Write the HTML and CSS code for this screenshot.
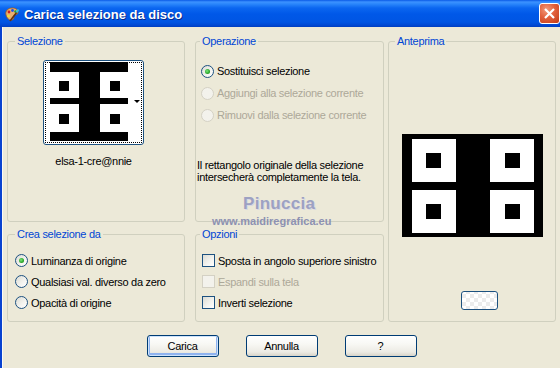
FILE: index.html
```html
<!doctype html>
<html>
<head>
  <title>Carica selezione da disco</title>
  <meta charset="utf-8">
  <link rel="stylesheet" href="styles.css">
</head>
<body>
<div class="window">
  <div class="titlebar">
    <svg class="app-icon" width="16" height="16" viewBox="0 0 16 16">
      <path d="M2 9 C1 5 4 2 8 2 C12 2 15 4 14 7 C13.5 9 11 8 10 9.5 C9 11 11 13 8 14 C5 15 3 12 2 9 Z" fill="#e8b070" stroke="#9a5a20" stroke-width="0.8"/>
      <circle cx="5" cy="6" r="1.4" fill="#d02020"/>
      <circle cx="8.5" cy="4.5" r="1.4" fill="#2050e0"/>
      <circle cx="11.5" cy="5.5" r="1.3" fill="#20a030"/>
      <circle cx="4.5" cy="10" r="1.3" fill="#f0e030"/>
      <path d="M6 15 L13 6" stroke="#603010" stroke-width="1.6"/>
      <path d="M12.5 6.5 L14.5 3.5" stroke="#30c0e0" stroke-width="2"/>
    </svg>
    <span class="title">Carica selezione da disco</span>
    <span class="close">
      <svg width="13" height="13" viewBox="0 0 13 13"><path d="M2 2 L11 11 M11 2 L2 11" stroke="#fff" stroke-width="2.2"/></svg>
    </span>
  </div>
  <div class="content">
    <div class="groups">
      <fieldset class="group g-sel">
        <legend>Selezione</legend>
        <div class="thumb-box">
          <div class="thumb">
            <svg class="thumb-img" width="78" height="79" viewBox="0 0 78 79">
              <rect width="78" height="79" fill="#000"/>
              <rect x="0" y="10" width="29" height="26" fill="#fff"/>
              <rect x="50" y="10" width="28" height="26" fill="#fff"/>
              <rect x="0" y="42" width="29" height="28" fill="#fff"/>
              <rect x="50" y="42" width="28" height="28" fill="#fff"/>
              <rect x="9" y="19" width="10" height="10" fill="#000"/>
              <rect x="60" y="19" width="10" height="10" fill="#000"/>
              <rect x="9" y="52" width="10" height="10" fill="#000"/>
              <rect x="60" y="52" width="10" height="10" fill="#000"/>
            </svg>
            <span class="thumb-arrow"></span>
          </div>
          <div class="thumb-name">elsa-1-cre@nnie</div>
        </div>
      </fieldset>

      <fieldset class="group g-op">
        <legend>Operazione</legend>
        <div class="opt"><span class="radio on"></span>Sostituisci selezione</div>
        <div class="opt off"><span class="radio"></span>Aggiungi alla selezione corrente</div>
        <div class="opt off"><span class="radio"></span>Rimuovi dalla selezione corrente</div>
        <p class="note">Il rettangolo originale della selezione<br>intersecherà completamente la tela.</p>
        <div class="watermark">
          <span class="wm-name">Pinuccia</span>
          <span class="wm-url">www.maidiregrafica.eu</span>
        </div>
      </fieldset>

      <fieldset class="group g-prev">
        <legend>Anteprima</legend>
        <svg class="preview" width="141" height="103" viewBox="0 0 141 103">
          <rect width="141" height="103" fill="#000"/>
          <rect x="10" y="5" width="44" height="43" fill="#fff"/>
          <rect x="88" y="5" width="44" height="43" fill="#fff"/>
          <rect x="10" y="56" width="44" height="43" fill="#fff"/>
          <rect x="88" y="56" width="44" height="43" fill="#fff"/>
          <rect x="24" y="19" width="15" height="15" fill="#000"/>
          <rect x="103" y="19" width="15" height="15" fill="#000"/>
          <rect x="24" y="70" width="15" height="15" fill="#000"/>
          <rect x="103" y="70" width="15" height="15" fill="#000"/>
        </svg>
        <span class="bg-button"></span>
      </fieldset>

      <fieldset class="group g-crea">
        <legend>Crea selezione da</legend>
        <div class="opt"><span class="radio on"></span>Luminanza di origine</div>
        <div class="opt"><span class="radio"></span>Qualsiasi val. diverso da zero</div>
        <div class="opt"><span class="radio"></span>Opacità di origine</div>
      </fieldset>

      <fieldset class="group g-opz">
        <legend>Opzioni</legend>
        <div class="opt"><span class="check"></span>Sposta in angolo superiore sinistro</div>
        <div class="opt off"><span class="check"></span>Espandi sulla tela</div>
        <div class="opt"><span class="check"></span>Inverti selezione</div>
      </fieldset>
    </div>

    <div class="buttons">
      <span class="btn default">Carica</span>
      <span class="btn">Annulla</span>
      <span class="btn">?</span>
    </div>
  </div>
</div>
</body>
</html>
```

FILE: styles.css
```css
body{
  margin: 0;
  background-color: #ece9d8;
  font-family: "Liberation Sans", Arial, sans-serif;
  font-size: 11px;
  letter-spacing: -0.3px;
  color: #000;
}
.window{
  width: 560px;
  height: 368px;
  overflow: hidden;
  background-color: #ece9d8;
}

/* title bar */
.titlebar{
  height: 27px;
  display: flex;
  align-items: center;
  background: linear-gradient(to bottom, #0a5ae6 0px, #3c92ff 2px, #2a86fb 4px, #0b66f0 8px, #0058e8 14px, #0055e3 22px, #0049d4 25px, #003ec0 27px);
  position: relative;
}
.app-icon{
  margin-left: 4px;
  margin-top: 1px;
}
.title{
  margin-left: 4px;
  margin-top: 2px;
  font-size: 13px;
  font-weight: bold;
  letter-spacing: 0;
  color: #fff;
  text-shadow: 1px 1px 0 #0a2a8a;
}
.close{
  position: absolute;
  left: 539px;
  top: 3px;
  width: 21px;
  height: 21px;
  box-sizing: border-box;
  border: 1px solid #fff;
  border-radius: 3px;
  background: radial-gradient(circle at 35% 30%, #f29a7c 0%, #e2603c 45%, #c13a16 100%);
  display: flex;
  align-items: center;
  justify-content: center;
}

/* body */
.content{
  border-left: 2px solid #0842d0;
  height: 341px;
  padding: 8px 0 0 5px;
  box-shadow: inset 1px 0 0 #fbfaf5;
}
.groups{
  display: grid;
  grid-template-columns: 188px 193px 168px;
  grid-template-rows: 187px 94px;
  row-gap: 6px;
}
.group{
  margin: 0;
  padding: 0;
  min-width: 0;
  box-sizing: border-box;
  border: 1px solid #d0d0bf;
  border-radius: 3px;
  position: relative;
}
.group legend{
  color: #0046d5;
  line-height: 13px;
  padding: 0 2px;
  margin-left: 7px;
}
.g-sel, .g-crea{
  width: 178px;
}
.g-op, .g-opz{
  width: 189px;
}
.g-op legend, .g-opz legend{
  margin-left: 4px;
}
.g-prev{
  grid-column: 3;
  grid-row: 1 / 3;
  display: flex;
  flex-direction: column;
  align-items: center;
}
.g-prev legend{
  margin-left: 6px;
}

/* selection thumbnail */
.thumb-box{
  width: 101px;
  margin: 12px 0 0 35px;
}
.thumb{
  width: 101px;
  height: 85px;
  box-sizing: border-box;
  border: 1px solid #1c5180;
  border-radius: 3px;
  background-color: #fff;
  position: relative;
  padding: 1px 0 0 6px;
}
.thumb::before{
  content: '';
  position: absolute;
  left: 1px;
  top: 1px;
  right: 1px;
  bottom: 1px;
  border: 1px dotted #000;
}
.thumb-img{
  display: block;
  position: relative;
}
.thumb-arrow{
  position: absolute;
  right: 3px;
  top: 39px;
  border-left: 3px solid transparent;
  border-right: 3px solid transparent;
  border-top: 3px solid #000;
}
.thumb-name{
  text-align: center;
  margin-top: 10px;
  line-height: 13px;
}

/* options */
.opt{
  display: flex;
  align-items: center;
  white-space: nowrap;
}
.g-op .opt{
  height: 22px;
  padding-left: 5px;
}
.g-op .opt:first-of-type{
  margin-top: 12px;
}
.g-crea .opt, .g-opz .opt{
  height: 21px;
}
.g-crea .opt{
  padding-left: 7px;
}
.g-opz .opt{
  padding-left: 6px;
}
.g-crea .opt:first-of-type, .g-opz .opt:first-of-type{
  margin-top: 9px;
}
.opt.off{
  color: #aca899;
}
.radio, .check{
  width: 13px;
  height: 13px;
  box-sizing: border-box;
  border: 1px solid #1c5180;
  background: linear-gradient(135deg, #dcdcd4 0%, #f4f4f0 60%, #fff 100%);
  margin-right: 3px;
  position: relative;
  flex: none;
}
.radio{
  border-radius: 50%;
}
.radio.on::after{
  content: '';
  position: absolute;
  left: 3px;
  top: 3px;
  width: 5px;
  height: 5px;
  border-radius: 50%;
  background: radial-gradient(circle at 40% 40%, #7be87b 0%, #2aa52a 60%, #1a8a1a 100%);
}
.opt.off .radio, .opt.off .check{
  border-color: #d4d1c4;
  background: #f3f2ec;
}
.note{
  margin: 33px 0 0 1px;
  line-height: 12px;
}
.watermark{
  position: absolute;
  left: 16px;
  top: 146px;
  display: flex;
  flex-direction: column;
  font-weight: bold;
  letter-spacing: 0;
  color: #9da1c2;
}
.wm-name{
  font-size: 17px;
  line-height: 20px;
  margin-left: 31px;
  letter-spacing: 0.3px;
  text-shadow: 1px 1px 0 #d8d8e4;
}
.wm-url{
  font-size: 11px;
  line-height: 14px;
  color: #8d91b2;
}

/* preview */
.preview{
  display: block;
  margin-top: 86px;
}
.bg-button{
  width: 37px;
  height: 19px;
  box-sizing: border-box;
  margin: 54px 0 0 15px;
  border: 1px solid #1c5180;
  border-radius: 3px;
  background-color: #fff;
  background-image: conic-gradient(#ececec 25%, #fff 0 50%, #ececec 0 75%, #fff 0);
  background-size: 8px 8px;
  background-position: 4px 2px;
}

/* buttons */
.buttons{
  display: flex;
  justify-content: center;
  gap: 27px;
  margin-top: 13px;
  padding-right: 4px;
}
.btn{
  width: 72px;
  height: 22px;
  box-sizing: border-box;
  border: 1px solid #003c74;
  border-radius: 3px;
  background: linear-gradient(to bottom, #fff 0%, #f8f8f4 40%, #ecebe4 80%, #d8d4c8 100%);
  display: flex;
  align-items: center;
  justify-content: center;
}
.btn.default{
  box-shadow: inset 0 0 0 1px #cde3fc, inset 0 -1px 0 2px #8fb3ef;
}
```
